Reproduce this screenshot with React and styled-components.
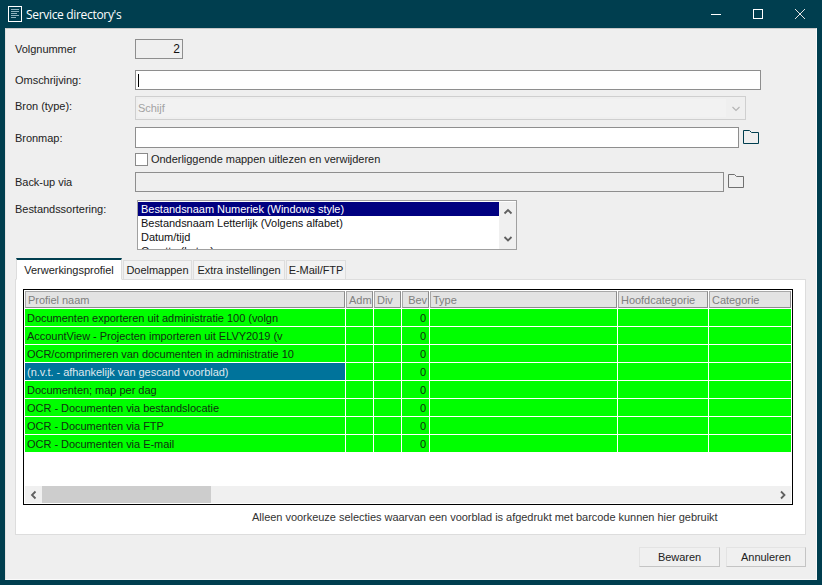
import React from 'react'
import styled, { createGlobalStyle } from 'styled-components'

const GlobalStyle = createGlobalStyle`
  html, body { margin: 0; padding: 0; background: #003e4f; }
  * { box-sizing: border-box; }
`

const Window = styled.div`
  width: 822px;
  height: 585px;
  display: flex;
  flex-direction: column;
  background: #003e4f;
  font-family: "Liberation Sans", Arial, sans-serif;
  font-size: 11px;
  letter-spacing: -0.03px;
  color: #222;
  overflow: hidden;
`

const TitleBar = styled.div`
  height: 28px;
  flex: none;
  display: flex;
  align-items: center;
  padding: 0 1px 0 8px;
  color: #fff;
  font-family: "Open Sans", sans-serif;
  font-size: 12px;
  letter-spacing: -0.32px;
`

const TitleText = styled.span`
  margin-left: 4px;
  flex: 1;
`

const WinButton = styled.div`
  width: 42px;
  height: 28px;
  display: flex;
  align-items: center;
  justify-content: center;
`

const Body = styled.div`
  flex: 1;
  margin: 0 5px 5px;
  background: #efefef;
  border: 1px solid #fafafa;
  border-left-color: #e2e2e2;
  border-top-color: #c8c8c8;
  display: flex;
  flex-direction: column;
  padding: 10px 10px 0 9px;
`

const Row = styled.div`
  display: flex;
  align-items: ${p => p.$align || 'center'};
  height: ${p => p.$h}px;
  margin-bottom: ${p => p.$gap || 0}px;
  flex: none;
`

const Label = styled.div`
  width: 120px;
  flex: none;
  padding-top: ${p => p.$top || 0}px;
  padding-bottom: ${p => p.$bottom || 0}px;
`

const Field = styled.div`
  width: ${p => p.$w}px;
  height: 100%;
  flex: none;
  border: 1px solid #8e8e8e;
  background: ${p => (p.$off ? '#efefef' : '#fff')};
  display: flex;
  align-items: center;
  justify-content: ${p => (p.$right ? 'flex-end' : 'flex-start')};
  padding: 0 2px;
  font-size: 12px;
  color: #111;
`

const Caret = styled.div`
  width: 1px;
  height: 13px;
  background: #000;
`

const SelectBox = styled.div`
  width: 611px;
  height: 100%;
  flex: none;
  border: 1px solid #cfcfcf;
  display: flex;
  padding: 2px 0 2px 2px;
`

const SelectValue = styled.div`
  flex: 1;
  background: #f2f2f2;
  color: #a3a3a3;
  display: flex;
  align-items: center;
`

const SelectArrow = styled.div`
  width: 19px;
  display: flex;
  align-items: center;
  justify-content: center;
  padding-top: 2px;
`

const IconSlot = styled.div`
  margin-left: 4px;
  margin-bottom: 2px;
  display: flex;
`

const CheckRow = styled.label`
  display: flex;
  align-items: center;
  margin-left: 120px;
  gap: 3px;
`

const CheckBox = styled.span`
  width: 13px;
  height: 13px;
  border: 1px solid #8a8a8a;
  background: #fff;
`

const ListBox = styled.div`
  width: 380px;
  height: 100%;
  margin-left: 2px;
  flex: none;
  border: 1px solid #a0a0a0;
  padding-top: 1px;
  background: #fff;
  display: flex;
  overflow: hidden;
`

const ListItems = styled.div`
  flex: 1;
  overflow: hidden;
`

const ListItem = styled.div`
  height: 14px;
  line-height: 14px;
  padding-left: 3px;
  white-space: nowrap;
  color: ${p => (p.$active ? '#fff' : '#111')};
  background: ${p => (p.$active ? '#000080' : 'transparent')};
`

const ScrollColumn = styled.div`
  width: 17px;
  background: #f0f0f0;
  display: flex;
  flex-direction: column;
  justify-content: space-between;
  align-items: center;
  padding: 5px 0 5px;
`

const Tabs = styled.div`
  display: flex;
  align-items: flex-end;
  height: 22px;
  flex: none;
  margin-top: 8px;
  margin-left: 1px;
  position: relative;
  z-index: 1;
`

const Tab = styled.div`
  height: ${p => (p.$active ? 22 : 20)}px;
  width: ${p => p.$w}px;
  margin-right: 1px;
  display: flex;
  align-items: center;
  justify-content: center;
  background: ${p => (p.$active ? '#fff' : '#f2f2f2')};
  border: 1px solid #ddd;
  border-top: ${p => (p.$active ? '2px solid #003e4f' : '1px solid #ddd')};
  border-bottom: ${p => (p.$active ? '1px solid #fff' : '1px solid #ddd')};
  color: #222;
`

const Panel = styled.div`
  width: 791px;
  height: 256px;
  flex: none;
  margin-top: -1px;
  background: #fff;
  border: 1px solid #ddd;
  padding: 9px 7px 0;
`

const Grid = styled.div`
  width: 770px;
  height: 216px;
  border: 1px solid #000;
  padding: 1px;
  display: flex;
  flex-direction: column;
  background: #fff;
`

const columns = '321px 28px 28px 28px 188px 91px 82px'

const GridRow = styled.div`
  display: grid;
  grid-template-columns: ${columns};
  height: 18px;
  flex: none;
  border-bottom: 1px solid #fff;
`

const HeadRow = styled.div`
  display: grid;
  grid-template-columns: ${columns};
  height: 18px;
  flex: none;
  padding-bottom: 1px;
`

const HeadCell = styled.div`
  border: 1px solid #8c8c8c;
  border-top-color: #a8a8a8;
  border-left-color: #a8a8a8;
  background: #e3e3e3;
  color: #808080;
  margin-right: 1px;
  display: flex;
  align-items: center;
  justify-content: ${p => (p.$right ? 'flex-end' : 'flex-start')};
  padding: 0 1px 0 2px;
  overflow: hidden;
  white-space: nowrap;

  &:last-child {
    margin-right: 0;
  }
`

const Cell = styled.div`
  display: flex;
  align-items: center;
  justify-content: ${p => (p.$right ? 'flex-end' : 'flex-start')};
  padding: 0 3px 0 2px;
  border-right: 1px solid #fff;
  color: ${p => (p.$selected ? '#dfe8ee' : '#103010')};
  background: ${p => (p.$selected ? '#00739b' : '#00ff00')};
  white-space: nowrap;
  overflow: hidden;

  &:last-child {
    border-right: 0;
  }
`

const GridFill = styled.div`
  flex: 1;
`

const HScroll = styled.div`
  height: 17px;
  flex: none;
  background: #f0f0f0;
  display: flex;
  align-items: center;
`

const ScrollArrow = styled.div`
  width: 17px;
  display: flex;
  justify-content: center;
`

const Thumb = styled.div`
  width: 169px;
  height: 17px;
  background: #cdcdcd;
  margin-right: auto;
`

const Note = styled.div`
  margin-top: 6px;
  margin-left: 229px;
  line-height: 13px;
  white-space: nowrap;
  color: #333;
`

const Footer = styled.div`
  display: flex;
  justify-content: flex-end;
  gap: 6px;
  margin-top: 12px;
`

const Button = styled.div`
  width: ${p => p.$w}px;
  height: 20px;
  display: flex;
  align-items: center;
  justify-content: center;
  background: #f0f0f0;
  border: 1px solid #e3e3e3;
  border-right-color: #c4c4c4;
  border-bottom-color: #c4c4c4;
`

const Chevron = ({ dir, color = '#606060', weight = 1.8 }) => {
  const points = {
    up: '1.5,6.5 5,3 8.5,6.5',
    down: '1.5,3 5,6.5 8.5,3',
    left: '6.5,1.5 3,5 6.5,8.5',
    right: '3,1.5 6.5,5 3,8.5',
  }[dir]
  return (
    <svg width="10" height="10" viewBox="0 0 10 10" fill="none" style={{ display: 'block' }}>
      <polyline points={points} stroke={color} strokeWidth={weight} />
    </svg>
  )
}

const FolderIcon = ({ color }) => (
  <svg width="16" height="14" viewBox="0 0 16 14" fill="none" style={{ display: 'block' }}>
    <path d="M0.5 13.5V0.5H6.5L8.5 2.5H15.5V13.5Z" stroke={color} strokeWidth="1" />
  </svg>
)

const AppIcon = () => (
  <svg width="14" height="16" viewBox="0 0 14 16" fill="none" style={{ display: 'block' }}>
    <rect x="0.5" y="0.5" width="13" height="15" stroke="#fff" />
    <path d="M3 3.5H11M3 5.5H11M3 7.5H9M3 9.5H11M3 11.5H8" stroke="#8fb3bd" />
  </svg>
)

const profiles = [
  'Documenten exporteren uit administratie 100 (volgn',
  'AccountView - Projecten importeren uit ELVY2019 (v',
  'OCR/comprimeren van documenten in administratie 10',
  '(n.v.t. - afhankelijk van gescand voorblad)',
  'Documenten; map per dag',
  'OCR - Documenten via bestandslocatie',
  'OCR - Documenten via FTP',
  'OCR - Documenten via E-mail',
]

const tabs = [
  { name: 'Verwerkingsprofiel', w: 106 },
  { name: 'Doelmappen', w: 69 },
  { name: 'Extra instellingen', w: 92 },
  { name: 'E-Mail/FTP', w: 60 },
]

export default function App() {
  return (
    <Window>
      <GlobalStyle />
      <TitleBar>
        <AppIcon />
        <TitleText>Service directory's</TitleText>
        <WinButton>
          <svg width="10" height="10" viewBox="0 0 10 10"><path d="M0 5.5H10" stroke="#fff" /></svg>
        </WinButton>
        <WinButton>
          <svg width="10" height="10" viewBox="0 0 10 10" fill="none"><rect x="0.5" y="0.5" width="9" height="9" stroke="#fff" /></svg>
        </WinButton>
        <WinButton>
          <svg width="12" height="12" viewBox="0 0 12 12" fill="none"><path d="M1 1L11 11M11 1L1 11" stroke="#e4e4e4" /></svg>
        </WinButton>
      </TitleBar>
      <Body>
        <Row $h={20} $gap={11}>
          <Label>Volgnummer</Label>
          <Field $w={48} $off $right>2</Field>
        </Row>
        <Row $h={20} $gap={6}>
          <Label>Omschrijving:</Label>
          <Field $w={626}><Caret /></Field>
        </Row>
        <Row $h={24} $gap={7}>
          <Label $bottom={4}>Bron (type):</Label>
          <SelectBox>
            <SelectValue>Schijf</SelectValue>
            <SelectArrow><Chevron dir="down" color="#b5b5b5" weight={1.2} /></SelectArrow>
          </SelectBox>
        </Row>
        <Row $h={21} $gap={4}>
          <Label>Bronmap:</Label>
          <Field $w={604} />
          <IconSlot><FolderIcon color="#003e4f" /></IconSlot>
        </Row>
        <Row $h={14} $gap={6}>
          <CheckRow><CheckBox />Onderliggende mappen uitlezen en verwijderen</CheckRow>
        </Row>
        <Row $h={20} $gap={8}>
          <Label>Back-up via</Label>
          <Field $w={589} $off />
          <IconSlot><FolderIcon color="#707070" /></IconSlot>
        </Row>
        <Row $h={50} $align="flex-start">
          <Label $top={3}>Bestandssortering:</Label>
          <ListBox>
            <ListItems>
              <ListItem $active>Bestandsnaam Numeriek (Windows style)</ListItem>
              <ListItem>Bestandsnaam Letterlijk (Volgens alfabet)</ListItem>
              <ListItem>Datum/tijd</ListItem>
              <ListItem>Grootte (bytes)</ListItem>
            </ListItems>
            <ScrollColumn>
              <Chevron dir="up" />
              <Chevron dir="down" />
            </ScrollColumn>
          </ListBox>
        </Row>
        <Tabs>
          {tabs.map((t, i) => (
            <Tab key={t.name} $w={t.w} $active={i === 0}>{t.name}</Tab>
          ))}
        </Tabs>
        <Panel>
          <Grid>
            <HeadRow>
              <HeadCell>Profiel naam</HeadCell>
              <HeadCell>Adm</HeadCell>
              <HeadCell>Div</HeadCell>
              <HeadCell $right>Bev</HeadCell>
              <HeadCell>Type</HeadCell>
              <HeadCell>Hoofdcategorie</HeadCell>
              <HeadCell>Categorie</HeadCell>
            </HeadRow>
            {profiles.map((name, i) => (
              <GridRow key={name}>
                <Cell $selected={i === 3}>{name}</Cell>
                <Cell />
                <Cell />
                <Cell $right>0</Cell>
                <Cell />
                <Cell />
                <Cell />
              </GridRow>
            ))}
            <GridFill />
            <HScroll>
              <ScrollArrow><Chevron dir="left" /></ScrollArrow>
              <Thumb />
              <ScrollArrow><Chevron dir="right" /></ScrollArrow>
            </HScroll>
          </Grid>
          <Note>Alleen voorkeuze selecties waarvan een voorblad is afgedrukt met barcode kunnen hier gebruikt</Note>
        </Panel>
        <Footer>
          <Button $w={81}>Bewaren</Button>
          <Button $w={80}>Annuleren</Button>
        </Footer>
      </Body>
    </Window>
  )
}
